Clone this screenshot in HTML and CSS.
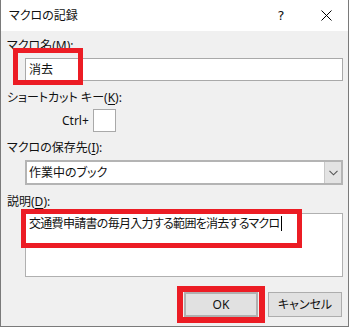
FILE: index.html
```html
<!DOCTYPE html>
<html lang="ja">
<head>
<meta charset="utf-8">
<link rel="stylesheet" href="styles.css">
</head>
<body>
<div class="dialog">
  <div class="titlebar">
    <span class="title">マクロの記録</span>
    <span class="help">?</span>
    <span class="close"><svg width="11" height="11" viewBox="0 0 11 11"><path d="M0.5 0.5 L10.5 10.5 M10.5 0.5 L0.5 10.5" stroke="#000" stroke-width="1" fill="none"/></svg></span>
  </div>
  <div class="body">
    <div class="label l1">マクロ名(<u>M</u>):</div>
    <div class="input name">消去</div>
    <div class="label l2">ショートカット キー(<u>K</u>):</div>
    <div class="ctrl-row"><span class="ctrl">Ctrl+</span><span class="keybox"></span></div>
    <div class="label l3">マクロの保存先(<u>I</u>):</div>
    <div class="select">
      <span class="sel-text">作業中のブック</span>
      <span class="sel-btn"><svg width="9" height="6" viewBox="0 0 9 6"><path d="M0.5 0.8 L4.5 4.8 L8.5 0.8" stroke="#555" stroke-width="1.1" fill="none"/></svg></span>
    </div>
    <div class="label l4">説明(<u>D</u>):</div>
    <div class="textarea"><span class="desc">交通費申請書の毎月入力する範囲を消去するマクロ</span><span class="caret"></span></div>
    <div class="buttons">
      <span class="btn ok">OK</span>
      <span class="btn cancel">キャンセル</span>
    </div>
  </div>
  <div class="mark m1"></div>
  <div class="mark m2"></div>
  <div class="mark m3"></div>
</div>
</body>
</html>
```
FILE: styles.css
```css
html, body {
  margin: 0;
  padding: 0;
  background: #ffffff;
}
body {
  width: 351px;
  height: 329px;
  overflow: hidden;
  font-family: "Noto Sans", "Noto Sans CJK JP", sans-serif;
  font-feature-settings: "palt" 1;
  font-size: 12px;
  color: #111;
}
.dialog {
  position: relative;
  box-sizing: border-box;
  width: 349px;
  height: 327px;
  border: 1px solid #7a7a7a;
  border-top: none;
  background: #f0f0f0;
  display: flex;
  flex-direction: column;
}
.titlebar {
  height: 31px;
  background: #ffffff;
  display: flex;
  align-items: center;
}
.title {
  flex: 1;
  padding-left: 8px;
  font-size: 12px;
  line-height: 16px;
}
.help {
  width: 46px;
  text-align: center;
  font-family: "DejaVu Sans", sans-serif;
  font-size: 13px;
  line-height: 16px;
}
.close {
  width: 44px;
  display: flex;
  justify-content: center;
  align-items: center;
}
.close svg { display: block; }
.body {
  flex: 1;
  padding: 7px 0 0 6px;
  display: flex;
  flex-direction: column;
  align-items: flex-start;
}
.label {
  line-height: 16px;
  height: 16px;
  white-space: nowrap;
}
.label u { text-underline-offset: 2px; }
.l2 { margin-top: 9px; }
.l3 { margin-top: 8px; }
.l4 { margin-top: 9px; }
.input {
  box-sizing: border-box;
  margin-top: 4px;
  margin-left: 18px;
  width: 318px;
  height: 23px;
  background: #fff;
  border: 1px solid #a9a9a9;
  padding-left: 3px;
  line-height: 21px;
}
.ctrl-row {
  margin-top: 3px;
  margin-left: 55px;
  display: flex;
  align-items: center;
  gap: 4px;
  height: 23px;
}
.ctrl {
  line-height: 16px;
}
.keybox {
  box-sizing: border-box;
  width: 23px;
  height: 23px;
  background: #fff;
  border: 1px solid #a9a9a9;
}
.select {
  box-sizing: border-box;
  margin-top: 4px;
  margin-left: 18px;
  width: 318px;
  height: 25px;
  background: #fff;
  border: 2px solid #b4b4b4;
  display: flex;
  align-items: stretch;
}
.sel-text {
  flex: 1;
  padding-left: 2px;
  line-height: 21px;
}
.sel-btn {
  width: 16px;
  background: #e3e3e3;
  border-left: 1px solid #c8c8c8;
  display: flex;
  align-items: center;
  justify-content: center;
}
.sel-btn svg { display: block; }
.textarea {
  box-sizing: border-box;
  margin-top: 3px;
  margin-left: 18px;
  width: 318px;
  height: 64px;
  background: #fff;
  border: 1px solid #b0b0b0;
  padding: 2px 3px;
  line-height: 16px;
  white-space: nowrap;
}
.desc {
  letter-spacing: -0.7px;
}
.caret {
  display: inline-block;
  width: 1px;
  height: 15px;
  background: #000;
  vertical-align: -3px;
  margin-left: 1px;
}
.buttons {
  margin-top: 15px;
  width: 335px;
  display: flex;
  justify-content: flex-end;
  gap: 10px;
}
.btn {
  box-sizing: border-box;
  width: 74px;
  height: 25px;
  background: #e1e1e1;
  border: 1px solid #adadad;
  display: flex;
  align-items: center;
  justify-content: center;
  line-height: 16px;
}
.btn.ok {
  border: 2px solid #b0b0b0;
}
.mark {
  position: absolute;
  box-sizing: border-box;
  border: 5px solid #ec1c24;
}
.m1 { left: 12px; top: 48px; width: 70px; height: 37px; }
.m2 { left: 20px; top: 209px; width: 281px; height: 39px; }
.m3 { left: 176px; top: 286px; width: 88px; height: 37px; border-width: 6px; }
```
